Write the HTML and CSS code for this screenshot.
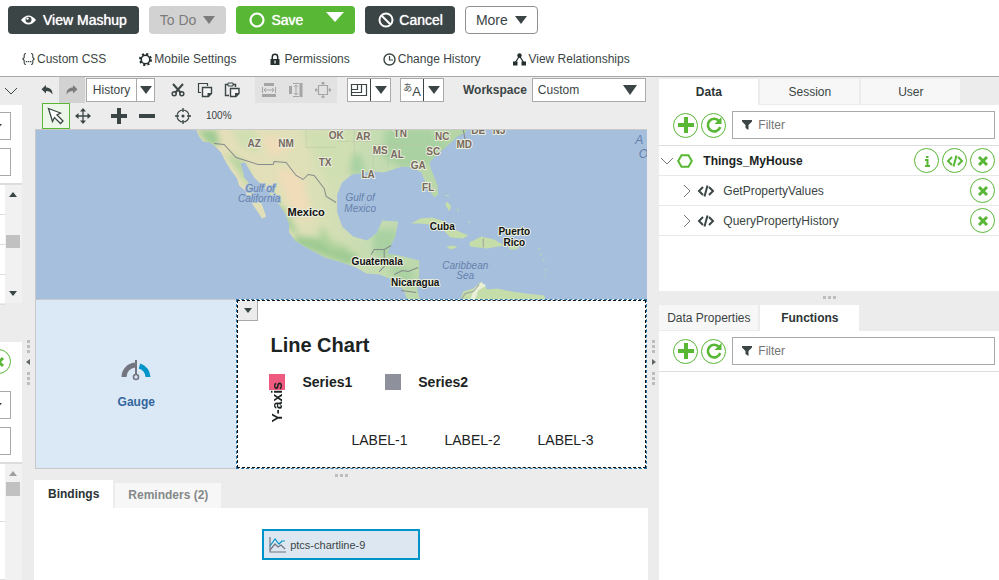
FILE: index.html
```html
<!DOCTYPE html>
<html lang="en">
  <head>
    <meta charset="UTF-8" />
    <meta name="viewport" content="width=device-width, initial-scale=1.0" />
    <title>Mashup Builder</title>
    <link rel="stylesheet" href="styles.css">
  </head>
  <body>
    <!-- Shared icons -->
    <svg class="sprite" width="0" height="0" aria-hidden="true">
      <symbol id="i-code" viewBox="0 0 18 14"><path d="M6 3L2 7l4 4M12 3l4 4-4 4M10.500 1.500l-3 11" fill="none" stroke="currentColor" stroke-width="2"/></symbol>
      <symbol id="i-close" viewBox="0 0 12 12"><path d="M2 2l8 8M10 2l-8 8" stroke="currentColor" stroke-width="3"/></symbol>
      <symbol id="i-plus" viewBox="0 0 18 18"><path d="M9 1v16M1 9h16" stroke="currentColor" stroke-width="4"/></symbol>
      <symbol id="i-refresh" viewBox="0 0 18 18"><path d="M14 5a6.300 6.300 0 1 0 1.200 6" fill="none" stroke="currentColor" stroke-width="2.600"/><path d="M16.500 1v7h-7z" fill="currentColor"/></symbol>
      <symbol id="i-filter" viewBox="0 0 10 10"><path d="M0 0h10v1.500L6.500 5v5l-3-2V5L0 1.500z" fill="currentColor"/></symbol>
      <symbol id="i-right" viewBox="0 0 8 14"><path d="M1 1l6 6-6 6" fill="none" stroke="currentColor"/></symbol>
      <symbol id="i-down" viewBox="0 0 14 8"><path d="M1 1l6 6 6-6" fill="none" stroke="currentColor"/></symbol>
      <symbol id="i-undo" viewBox="0 0 12 10"><path d="M5 0v2.500c4 0 6.500 2 6.500 7C10 7 8 6 5 6v2.500L.5 4.300z" fill="currentColor"/></symbol>
    </svg>

    <header class="header">
      <div class="actions">
        <button class="btn btn-dark btn-view">
          <svg width="15" height="10" viewBox="0 0 15 10"><path d="M0 5Q7.500-4 15 5 7.500 14 0 5z" fill="#fff"/><circle cx="7.500" cy="4.800" r="3" fill="#3b4545"/><circle cx="6.500" cy="3.600" r="1.200" fill="#fff"/></svg>
          View Mashup
        </button>
        <button class="btn btn-disabled" disabled>To Do <span class="caret"></span></button>
        <div class="btn-group">
          <button class="btn btn-green btn-save">
            <svg width="16" height="16" viewBox="0 0 16 16"><circle cx="8" cy="8" r="6.500" fill="none" stroke="#fff" stroke-width="2.200"/></svg>
            Save
          </button>
          <button class="btn btn-green btn-more" aria-label="Save options"><span class="caret caret-large"></span></button>
        </div>
        <button class="btn btn-dark btn-cancel">
          <svg width="16" height="16" viewBox="0 0 16 16"><circle cx="8" cy="8" r="6.500" fill="none" stroke="#fff" stroke-width="2"/><path d="M3.500 3.500l9 9" stroke="#fff" stroke-width="2"/></svg>
          Cancel
        </button>
        <button class="btn btn-outline">More <span class="caret"></span></button>
      </div>
      <nav class="links">
        <a href="#css">
          <svg width="13" height="14" viewBox="0 0 13 14"><path d="M4 1.500Q2.200 1.500 2.200 3v2.500L.8 7l1.400 1.500V11q0 1.500 1.800 1.500M9 1.500q1.800 0 1.800 1.500v2.500L12.200 7l-1.400 1.500V11q0 1.500-1.800 1.500" fill="none" stroke="#3b4545" stroke-width="1.100"/><path d="M3.800 9h1.400v1.300H3.800zM5.900 9h1.400v1.300H5.900zM8 9h1.400v1.300H8z" fill="#3b4545"/></svg>
          Custom CSS
        </a>
        <a href="#mobile">
          <svg width="13" height="13" viewBox="0 0 13 13"><circle cx="6.500" cy="6.500" r="4.300" fill="none" stroke="#252e2e" stroke-width="1.600"/><circle cx="6.500" cy="6.500" r="5.500" fill="none" stroke="#252e2e" stroke-width="2" stroke-dasharray="2.160"/></svg>
          Mobile Settings
        </a>
        <a href="#permissions">
          <svg width="13" height="13" viewBox="0 0 13 13"><path d="M3.300 6V4a2.700 2.700 0 0 1 5.400 0v2" fill="none" stroke="#252e2e" stroke-width="1.500"/><path d="M1.500 6h9v6h-9z" fill="#252e2e"/><path d="M6 7.500v3" stroke="#fff" stroke-width="1.200"/></svg>
          Permissions
        </a>
        <a href="#history">
          <svg width="13" height="13" viewBox="0 0 13 13"><circle cx="6.500" cy="6.500" r="5.500" fill="none" stroke="#3b4545" stroke-width="1.400"/><path d="M6.500 3v4H10" fill="none" stroke="#3b4545" stroke-width="1.200"/></svg>
          Change History
        </a>
        <a href="#relationships">
          <svg width="13" height="13" viewBox="0 0 13 13"><path d="M6.500 3L2 10M6.500 3L11 10" stroke="#252e2e" stroke-width="1.300"/><circle cx="6.500" cy="2.500" r="2.200" fill="#252e2e"/><path d="M0 8.500h4.500v4H0zM8.500 8.500H13v4H8.500z" fill="#252e2e"/></svg>
          View Relationships
        </a>
      </nav>
    </header>

    <main class="workspace">
      <!-- Right edge of the collapsed left panels -->
      <aside class="left-panel">
        <div class="left-head"><svg width="14" height="8"><use href="#i-down"/></svg></div>
        <div class="left-fields">
          <button class="field-edge" aria-label="Category"><span class="caret caret-small"></span></button>
          <input class="field-edge" type="text" aria-label="Filter widgets">
        </div>
        <div class="scroll-list">
          <div class="rows"><i></i><i></i><i></i><i></i></div>
          <div class="scrollbar"><span class="caret caret-small caret-up"></span><span class="thumb thumb-mid"></span><span class="caret caret-small"></span></div>
        </div>
        <div class="left-space"></div>
        <div class="left-fields left-fields-tall">
          <button class="round" aria-label="Remove"><svg width="12" height="12"><use href="#i-close"/></svg></button>
          <button class="field-edge" aria-label="Property type"><span class="caret caret-small"></span></button>
          <input class="field-edge" type="text" aria-label="Filter properties">
        </div>
        <div class="scroll-list scroll-list-last">
          <div class="rows rows-tall"><i></i><i></i></div>
          <div class="scrollbar"><span class="caret caret-small caret-up caret-dim"></span><span class="thumb"></span></div>
        </div>
      </aside>
      <div class="splitter"><i></i><i></i><i></i><span class="arrow"></span><i></i><i></i><i></i></div>

      <section class="center">
        <div class="toolbar">
          <div class="tool-row">
            <button class="tool tool-undo" aria-label="Undo"><svg width="12" height="10"><use href="#i-undo"/></svg></button>
            <button class="tool tool-redo" aria-label="Redo" disabled><svg width="12" height="10"><use href="#i-undo"/></svg></button>
            <div class="combo combo-history"><button>History</button><button aria-label="Show history"><span class="caret"></span></button></div>
            <div class="tool-set tool-edit">
              <button class="tool" aria-label="Cut"><svg width="14" height="14" viewBox="0 0 14 14"><path d="M2 1l8 9M12 1L4 10" stroke="#3b4545" stroke-width="2"/><circle cx="3.200" cy="10.800" r="2" fill="none" stroke="#3b4545" stroke-width="1.500"/><circle cx="10.800" cy="10.800" r="2" fill="none" stroke="#3b4545" stroke-width="1.500"/></svg></button>
              <button class="tool" aria-label="Copy"><svg width="16" height="16" viewBox="0 0 16 16"><path d="M4 10.500H1.500v-9h9V4" fill="none" stroke="#3b4545" stroke-width="1.200"/><path d="M5.500 5.500h9v6l-3 3h-6z" fill="#f5f5f5" stroke="#3b4545" stroke-width="1.400"/><path d="M10.500 15v-4H15z" fill="#3b4545"/></svg></button>
              <button class="tool" aria-label="Paste"><svg width="16" height="16" viewBox="0 0 16 16"><path d="M5 13.500H1.500v-11H4M9 2.500h2.500V5" fill="none" stroke="#3b4545" stroke-width="1.400"/><path d="M4 1h5v3H4z" fill="none" stroke="#3b4545"/><path d="M6.500 6.500h8.500v5l-3 3H6.500z" fill="#f5f5f5" stroke="#3b4545" stroke-width="1.400"/><path d="M11 15v-4h4z" fill="#3b4545"/></svg></button>
            </div>
            <div class="tool-set tool-align">
              <button class="tool" aria-label="Same width" disabled><svg width="16" height="16" viewBox="0 0 16 16"><path d="M3 2.500h10" stroke="#a5a5a5" stroke-width="3"/><path d="M1 13.500h14" stroke="#a5a5a5" stroke-width="3"/><path d="M1.500 5v6M14.500 5v6M3 8h10M5 6L3 8l2 2M11 6l2 2-2 2" fill="none" stroke="#a5a5a5"/></svg></button>
              <button class="tool" aria-label="Same height" disabled><svg width="16" height="16" viewBox="0 0 16 16"><path d="M2.500 4v8" stroke="#a5a5a5" stroke-width="3"/><path d="M13 1v14" stroke="#a5a5a5" stroke-width="3"/><path d="M5 1.500h6M5 14.500h6M8 3v10M6 5l2-2 2 2M6 11l2 2 2-2" fill="none" stroke="#a5a5a5"/></svg></button>
              <button class="tool" aria-label="Same size" disabled><svg width="16" height="16" viewBox="0 0 16 16"><path d="M3.500 3.500h9v9h-9zM8 0v3M8 13v3M0 8h3M13 8h3M6.500 1.500L8 0l1.500 1.500M6.500 14.500L8 16l1.500-1.500M1.500 6.500L0 8l1.500 1.500M14.500 6.500L16 8l-1.500 1.500" fill="none" stroke="#a5a5a5" stroke-width="1.200"/></svg></button>
            </div>
            <div class="combo combo-icon"><button aria-label="Layout"><svg width="18" height="14" viewBox="0 0 18 14"><path d="M1.500 1.500h15v11h-15zM1.500 9.500h10v-8M1.500 6.500h6v-5" fill="none" stroke="#3b4545" stroke-width="1.200"/></svg></button><button aria-label="Layout options"><span class="caret"></span></button></div>
            <div class="combo combo-icon"><button class="lang" aria-label="Localization"><span>あ</span><span>A</span></button><button aria-label="Languages"><span class="caret"></span></button></div>
            <label class="workspace-label" for="workspace">Workspace</label>
            <div class="select-wrap">
              <select id="workspace"><option>Custom</option></select>
              <span class="caret caret-select"></span>
            </div>
          </div>
          <div class="tool-row tool-row-zoom">
            <button class="tool tool-active" aria-label="Select"><svg width="18" height="18" viewBox="0 0 18 18"><path d="M1.500 1.500l12 4.500-3.500 2 6 6-2.500 2.500-6-6-2 4z" fill="#fff" stroke="#3b4545" stroke-width="1.300"/></svg></button>
            <button class="tool tool-move" aria-label="Move"><svg width="16" height="16" viewBox="0 0 16 16"><path d="M8 1v14M1 8h14" stroke="#3b4545" stroke-width="1.300"/><path d="M8 0l3 3.500H5zM8 16l3-3.500H5zM0 8l3.500-3v6zM16 8l-3.500-3v6z" fill="#3b4545"/></svg></button>
            <button class="tool tool-zoom" aria-label="Zoom in"><svg width="18" height="18"><use href="#i-plus"/></svg></button>
            <button class="tool tool-zoom" aria-label="Zoom out"><svg width="18" height="18" viewBox="0 0 18 18"><path d="M1 9h16" stroke="#3b4545" stroke-width="4"/></svg></button>
            <button class="tool tool-reset" aria-label="Reset zoom"><svg width="16" height="16" viewBox="0 0 16 16"><circle cx="8" cy="8" r="6" fill="none" stroke="#3b4545" stroke-width="1.100"/><path d="M8 0v4M8 12v4M0 8h4M12 8h4" stroke="#3b4545" stroke-width="1.300"/><circle cx="8" cy="8" r="1.500" fill="#3b4545"/></svg></button>
            <span class="zoom-value">100%</span>
          </div>
        </div>

        <div class="canvas">
          <svg class="map" viewBox="0 0 611 170" preserveAspectRatio="xMidYMid slice">
            <defs>
              <path id="mainland" d="M160 0l3 7 4 5 7 1 5 4 6 6 5 10 5 8 6 8 2 7 6 5 4 9 7 10 6 9 4-2-2-6-3-8-5-7-5-10-7-8-2-9-2-5 5-1 4 7 5 8 10 10 7 8 8 9 6 9 4 10v9l6 8 13 8 17 9 17 5 14 5 10 6 13 1 13 5 11 10 5 12h12l-3-12 2-15v-14l-20-5-12-2 4-9 4-8 3-15-16-1-5 12-10 8-14-4-11-10-5-14v-18l5-12 10-8 20-3 12 1 18-6 10 1 9 5 6 14 7 11 4-3-1-10-6-15-2-7 10-10 13-11 5-5 9-4-2-9z"/>
              <clipPath id="land"><use href="#mainland"/></clipPath>
              <linearGradient id="terrain" x1="0" x2="1"><stop offset="0" stop-color="#e7dfb9"/><stop offset=".4" stop-color="#dfe0b8"/><stop offset=".65" stop-color="#c6dcb2"/><stop offset="1" stop-color="#b3d4a5"/></linearGradient>
              <filter id="soft" x="-20%" y="-20%" width="140%" height="140%"><feGaussianBlur stdDeviation="3"/></filter>
            </defs>
            <rect width="611" height="170" fill="#a5bfdd"/>
            <use href="#mainland" fill="url(#terrain)"/>
            <g clip-path="url(#land)">
              <g filter="url(#soft)">
                <path d="M160 0h20l4 15-10 2zM228 60l20 20 15 25-10-5-18-27zM258 106l20 2 25 10 20 8-10 10-55-20z" fill="#9fcb93"/>
                <path d="M188 22l20 10 8 25 10 20-20-30zM285 95l12 17 20 6-20 3-15-12z" fill="#b3d49d"/>
                <path d="M240 40l15 0 12 12 10 40 -20-8zM225 8h20l10 12-20 6z" fill="#f0dcb9"/>
                <path d="M310 25h15l5 20h-15zM350 0h40l25 15-20 18-25 6-25-12zM337 100h25l-5 30-20-5zM350 135l25 5 3 20-20-14z" fill="#a9d1a2"/>
                <path d="M195 0l10 18 18 5 2-10-8-14zM265 0h50v35l-18 20-15-20z" fill="#d0dfb1"/>
              </g>
              <path d="M270 0v18h30M300 12h35M337 17v28M352 17v20M338 15h55M365 15v22M392 0v12M318 0v25" fill="none" stroke="#b4c6a6" stroke-width=".5"/>
            </g>
            <g fill="#c5dda9">
              <path d="M375 94l9-5 12-1 12 4 10 8 14 6-5 3-13-1-8-9-12-4-10-1z"/>
              <path d="M433 113l12-6 13 3 10 6-17 3-9-1-8-1zM410 117l8-1 3 2-7 2zM473 117h10l-2 3h-8zM409 75l4 7 2-5-4-5zM407 65l6 1-1 1z"/>
              <path d="M424 170l3-8 10-3 8-7 6 8 10-1 14 3 15 2 18 2 1 5z"/>
              <path d="M502 119h2v1h-2zM504 124h1v2h-1zM507 130h1v2h-1zM509 139h1v2h-1zM508 147h1v1h-1zM420 78l3 3-1 1zM432 92h2v1h-2z"/>
            </g>
            <path d="M445 153l-7 6-4 11 5 0 3-9 8-5z" fill="#eaf0d8"/>
            <path d="M425 170l4-6 8-2 6-7M447 109v9" fill="none" stroke="#9aa19a"/>
            <path d="M178 14l10 1 12 13 22 7h15l1-3 12 1 10 13 7 4 5-5 6 1 10 13 2 8 10 6M335 125l3-5h10v17l-5 5M348 120l7-4M358 145l8-4 6 1 10-4M365 161l15 2M427 0l2 11" fill="none" stroke="#858b8b"/>
            <g class="map-state">
              <text x="218" y="18">AZ</text><text x="250" y="18">NM</text><text x="300" y="10">OK</text><text x="327" y="11">AR</text><text x="364" y="8">TN</text><text x="406" y="11">NC</text><text x="344" y="25">MS</text><text x="361" y="29">AL</text><text x="397" y="26">SC</text><text x="289" y="37">TX</text><text x="382" y="40">GA</text><text x="332" y="49">LA</text><text x="392" y="62">FL</text><text x="428" y="19">MD</text><text x="442" y="5">DE</text><text x="463" y="5">NJ</text>
            </g>
            <g class="map-water">
              <text x="224" y="63">Gulf of</text><text x="223" y="73">California</text><text x="324" y="72">Gulf of</text><text x="324" y="83">Mexico</text><text x="429" y="139">Caribbean</text><text x="429" y="149">Sea</text>
            </g>
            <g class="map-ocean"><text x="603" y="15">A</text><text x="607" y="29">O</text></g>
            <g class="map-country">
              <text class="map-big" x="270" y="87">Mexico</text><text x="406" y="101">Cuba</text><text x="478" y="106">Puerto</text><text x="478" y="116">Rico</text><text x="341" y="135">Guatemala</text><text x="379" y="156">Nicaragua</text>
            </g>
          </svg>
          <div class="widgets">
            <div class="gauge">
              <svg width="30" height="22" viewBox="0 0 30 22"><path d="M3 18A12 12 0 0 1 14 6" fill="none" stroke="#73757f" stroke-width="5"/><path d="M18.500 7A12 12 0 0 1 27 18" fill="none" stroke="#0094c8" stroke-width="5"/><path d="M15 1v14" stroke="#73757f" stroke-width="2"/><circle cx="15" cy="18" r="2.500" fill="#dbe9f7" stroke="#73757f" stroke-width="1.600"/></svg>
              <span>Gauge</span>
            </div>
            <div class="chart-frame">
              <div class="chart">
                <button class="chart-menu" aria-label="Widget menu"><span class="caret caret-small"></span></button>
                <h2>Line Chart</h2>
                <div class="legend">
                  <span class="swatch swatch-pink"></span><span class="series">Series1</span>
                  <span class="swatch swatch-gray"></span><span class="series">Series2</span>
                  <span class="y-axis">Y-axis</span>
                </div>
                <div class="x-labels"><span>LABEL-1</span><span>LABEL-2</span><span>LABEL-3</span></div>
              </div>
            </div>
          </div>
        </div>

        <div class="dots"><i></i><i></i><i></i></div>
        <div class="bottom-tabs">
          <button class="bottom-tab active">Bindings</button>
          <button class="bottom-tab">Reminders (2)</button>
        </div>
        <div class="bindings">
          <div class="node">
            <svg width="17" height="17" viewBox="0 0 17 17"><path d="M1 1v15h16" fill="none" stroke="#73757f" stroke-width="1.200"/><path d="M1 14l5-6 3 3 3-2 4 4" fill="none" stroke="#73757f" stroke-width="1.200"/><path d="M1 10l5-7 4 5 3-3h3" fill="none" stroke="#0094c8" stroke-width="1.200"/></svg>
            <span>ptcs-chartline-9</span>
          </div>
        </div>
      </section>

      <div class="splitter splitter-right"><i></i><i></i><i></i><span class="arrow arrow-right"></span><i></i><i></i><i></i></div>

      <aside class="right-panel">
        <div class="tabs tabs-top"><button class="tab active">Data</button><button class="tab">Session</button><button class="tab">User</button></div>
        <div class="data">
          <div class="filter-row">
            <button class="round" aria-label="Add data"><svg width="18" height="18"><use href="#i-plus"/></svg></button>
            <button class="round" aria-label="Refresh data"><svg width="18" height="18"><use href="#i-refresh"/></svg></button>
            <label class="filter"><svg width="10" height="10"><use href="#i-filter"/></svg><input type="text" placeholder="Filter" aria-label="Filter data"></label>
          </div>
          <div class="entity">
            <svg class="chevron" width="14" height="8"><use href="#i-down"/></svg>
            <svg width="16" height="14" viewBox="0 0 16 14"><path d="M4.500 1.200h7L14.800 7l-3.300 5.800h-7L1.200 7z" fill="none" stroke="#58b735" stroke-width="2"/></svg>
            <strong>Things_MyHouse</strong>
            <button class="round" aria-label="Information"><svg width="12" height="12" viewBox="0 0 12 12"><path d="M4 5h2.500v6M4 11h5" fill="none" stroke="currentColor" stroke-width="2"/><path d="M5 1h2.500v2H5z" fill="currentColor"/></svg></button>
            <button class="round" aria-label="Add services"><svg width="18" height="14"><use href="#i-code"/></svg></button>
            <button class="round" aria-label="Remove Things_MyHouse"><svg width="12" height="12"><use href="#i-close"/></svg></button>
          </div>
          <div class="entity service">
            <svg class="chevron" width="8" height="14"><use href="#i-right"/></svg>
            <svg width="18" height="14"><use href="#i-code"/></svg>
            <span>GetPropertyValues</span>
            <button class="round" aria-label="Remove GetPropertyValues"><svg width="12" height="12"><use href="#i-close"/></svg></button>
          </div>
          <div class="entity service">
            <svg class="chevron" width="8" height="14"><use href="#i-right"/></svg>
            <svg width="18" height="14"><use href="#i-code"/></svg>
            <span>QueryPropertyHistory</span>
            <button class="round" aria-label="Remove QueryPropertyHistory"><svg width="12" height="12"><use href="#i-close"/></svg></button>
          </div>
        </div>
        <div class="dots"><i></i><i></i><i></i></div>
        <div class="tabs"><button class="tab">Data Properties</button><button class="tab active">Functions</button></div>
        <div class="functions">
          <div class="filter-row">
            <button class="round" aria-label="Add function"><svg width="18" height="18"><use href="#i-plus"/></svg></button>
            <button class="round" aria-label="Refresh functions"><svg width="18" height="18"><use href="#i-refresh"/></svg></button>
            <label class="filter"><svg width="10" height="10"><use href="#i-filter"/></svg><input type="text" placeholder="Filter" aria-label="Filter functions"></label>
          </div>
        </div>
      </aside>
    </main>
  </body>
</html>
```

FILE: styles.css
```css
* {
  box-sizing: border-box;
}
body {
  margin: 0;
  height: 100vh;
  display: flex;
  flex-direction: column;
  overflow: hidden;
  background-color: #fff;
  color: #3b4545;
  font-family: "Liberation Sans", Arial, "Noto Sans CJK JP", sans-serif;
  font-size: 12px;
  line-height: 16px;
}
button, input, select {
  font: inherit;
  color: inherit;
  margin: 0;
  padding: 0;
  border: 0;
  border-radius: 0;
  background: none;
}
button {
  display: flex;
  align-items: center;
  justify-content: center;
}
svg {
  display: block;
  flex: none;
}
.sprite {
  position: absolute;
}
.caret {
  flex: none;
  border: 6px solid transparent;
  border-top: 8px solid currentColor;
  border-bottom: 0;
}
.caret-large {
  border-width: 10px 9px 0;
}
.caret-small {
  border-width: 5px 4px 0;
}
.caret-up {
  transform: rotate(180deg);
}
.caret-dim {
  color: #a0a0a0;
}

/* Header */
.header {
  flex: none;
  border-bottom: 1px solid #a8a8a8;
}
.actions {
  display: flex;
  gap: 10px;
  padding: 6px 8px 0;
}
.btn {
  height: 28px;
  padding: 0 10px;
  gap: 7px;
  border-radius: 4px;
  font-size: 14px;
  white-space: nowrap;
}
.btn-dark {
  background-color: #3b4545;
  color: #fff;
}
.btn-view, .btn-cancel {
  padding: 0 12px 0 13px;
  text-shadow: 0 0 1px #fff;
}
.btn-cancel {
  gap: 5px;
}
.btn-disabled {
  background-color: #d2d2d2;
  color: #7b7b7b;
  padding: 0 11px;
}
.btn-group {
  display: flex;
}
.btn-green {
  background-color: #58b735;
  color: #fff;
}
.btn-save {
  padding: 0 11px 0 13px;
  gap: 6px;
  border-radius: 4px 0 0 4px;
  text-shadow: 0 0 1px #fff;
}
.btn-more {
  width: 41px;
  border-radius: 0 4px 4px 0;
  padding-bottom: 6px;
}
.btn-outline {
  border: 1px solid #8c9191;
}
.links {
  display: flex;
  gap: 33px;
  padding: 17px 22px 9px;
}
.links a {
  display: flex;
  align-items: center;
  gap: 2px;
  color: #3b4545;
  text-decoration: none;
  white-space: nowrap;
}

/* Left panel */
.workspace {
  flex: 1;
  min-height: 0;
  display: flex;
  background-color: #ececec;
}
.left-panel {
  width: 22px;
  flex: none;
  display: flex;
  flex-direction: column;
  overflow: hidden;
}
.left-head {
  height: 28px;
  padding: 10px 4px;
}
.left-fields {
  display: flex;
  flex-direction: column;
  align-items: flex-end;
  gap: 8px;
  padding: 7px 11px;
  background-color: #fff;
  border-bottom: 2px solid #ddd;
}
.field-edge {
  width: 120px;
  height: 28px;
  border: 1px solid #aaa;
  background-color: #fff;
  justify-content: flex-end;
  padding-right: 8px;
}
.left-fields-tall .round {
  margin-bottom: 9px;
}
.scroll-list {
  height: 118px;
  display: flex;
  background-color: #fff;
}
.scroll-list-last {
  flex: 1;
}
.rows {
  width: 5px;
}
.rows i {
  display: block;
  height: 30px;
  border-bottom: 1px solid #ddd;
}
.rows-tall i {
  height: 58px;
}
.scrollbar {
  width: 17px;
  display: flex;
  flex-direction: column;
  align-items: center;
  padding: 7px 3px 7px 1px;
  background-color: #f1f1f1;
}
.thumb {
  width: 14px;
  height: 14px;
  margin-top: 6px;
  background-color: #c1c1c1;
}
.thumb-mid {
  margin: 38px 0 43px;
}
.left-space {
  height: 40px;
}

/* Splitters */
.splitter {
  flex: none;
  width: 12px;
  display: flex;
  flex-direction: column;
  align-items: center;
  gap: 2px;
  padding-top: 263px;
}
.splitter-right {
  width: 11px;
}
.splitter i, .dots i {
  width: 3px;
  height: 3px;
  background-color: #bdbdbd;
}
.arrow {
  margin: 4px 0 5px;
  border: 3px solid transparent;
  border-left: 0;
  border-right: 4px solid #606666;
}
.arrow-right {
  border-right: 0;
  border-left: 4px solid #606666;
}
.dots {
  display: flex;
  justify-content: center;
  gap: 2px;
}

/* Toolbar */
.center {
  flex: 1;
  min-width: 0;
  display: flex;
  flex-direction: column;
}
.toolbar {
  padding: 0 1px;
}
.tool-row {
  display: flex;
  align-items: center;
  height: 26px;
}
.tool {
  height: 26px;
}
.tool-undo {
  width: 24px;
}
.tool-redo {
  width: 26px;
  background-color: #d2d2d2;
  color: #7b7b7b;
}
.tool-redo svg {
  transform: scaleX(-1);
}
.combo {
  display: flex;
  height: 24px;
  border: 1px solid #aaa;
  background-color: #fff;
}
.combo button + button {
  width: 18px;
  border-left: 1px solid #aaa;
}
.combo-history {
  margin-left: 1px;
}
.combo-history button:first-child {
  width: 49px;
}
.tool-set {
  display: flex;
  justify-content: space-between;
}
.tool-edit {
  width: 69px;
  margin: 0 15px 0 16px;
}
.tool-align {
  width: 82px;
  padding: 0 6px;
  background-color: #e2e2e2;
}
.combo-icon {
  width: 44px;
  margin-left: 10px;
}
.combo-icon button:first-child {
  flex: 1;
}
.combo-icon button + button {
  width: 20px;
  border-color: #3b4545;
}
.combo-icon + .combo-icon {
  margin-left: 9px;
}
.lang span:first-child {
  font-size: 9px;
  padding-bottom: 5px;
}
.lang span:last-child {
  font-size: 13px;
  padding-top: 4px;
}
.workspace-label {
  margin: 0 5px 0 19px;
  font-weight: bold;
}
.select-wrap {
  flex: 1;
  display: grid;
  align-items: center;
  margin-right: 1px;
}
.select-wrap > * {
  grid-area: 1 / 1;
}
.select-wrap select {
  width: 100%;
  height: 24px;
  padding-left: 5px;
  border: 1px solid #aaa;
  background-color: #fff;
  appearance: none;
}
.caret-select {
  justify-self: end;
  margin-right: 9px;
  border-width: 10px 7px 0;
  pointer-events: none;
}
.tool-row-zoom {
  padding-left: 7px;
}
.tool-active {
  width: 28px;
  background-color: #edf7e9;
  border: 1px solid #58b735;
}
.tool-move {
  width: 26px;
  margin-right: 9px;
}
.tool-zoom {
  width: 28px;
}
.tool-reset {
  width: 44px;
}
.zoom-value {
  margin-left: 1px;
  font-size: 10px;
}

/* Canvas */
.canvas {
  margin: 0 1px;
  border: 1px solid #c8c8c8;
  border-width: 1px 0 0 1px;
}
.map {
  width: 100%;
  height: 169px;
}
.map text {
  text-anchor: middle;
  font-size: 10px;
  paint-order: stroke;
  stroke: #e9eedd;
  stroke-width: 2px;
  stroke-linejoin: round;
}
.map .map-state {
  fill: #78695f;
  font-weight: bold;
}
.map .map-water text, .map .map-ocean text {
  fill: #657fac;
  stroke: #a5bfdd;
  font-style: italic;
}
.map .map-ocean text {
  font-size: 12px;
}
.map .map-country {
  fill: #111;
  font-weight: bold;
}
.map .map-big {
  font-size: 11px;
}
.widgets {
  display: flex;
  height: 170px;
}
.gauge {
  flex: 201;
  display: flex;
  flex-direction: column;
  align-items: center;
  gap: 13px;
  padding-top: 59px;
  background-color: #dbe9f7;
  border: 1px solid #c8c8c8;
  border-width: 1px 0;
  color: #33669c;
  font-weight: bold;
}
.chart-frame {
  flex: 410;
  border: 1px dashed #2a77ad;
  background-color: #fff;
}
.chart {
  height: 100%;
  border: 1px dashed #111;
  color: #1c2323;
  font-size: 14px;
}
.chart-menu {
  width: 20px;
  height: 20px;
  background-color: #ececec;
  border: 1px solid #aaa;
  border-width: 0 1px 1px 0;
  color: #3b4545;
}
.chart h2 {
  margin: 12px 0 17px 32px;
  font-size: 20px;
  line-height: 24px;
}
.legend {
  position: relative;
  display: flex;
  align-items: center;
  margin-left: 31px;
  font-weight: bold;
}
.swatch {
  width: 16px;
  height: 16px;
  margin-right: 17px;
}
.series + .swatch {
  margin-left: 33px;
}
.swatch-pink {
  background-color: #ee5a80;
}
.swatch-gray {
  background-color: #8e909b;
}
/* Overlaps the first legend marker */
.y-axis {
  position: absolute;
  left: 0;
  top: 8px;
  white-space: nowrap;
  writing-mode: vertical-rl;
  transform: rotate(180deg);
}
.x-labels {
  display: flex;
  gap: 37px;
  margin: 42px 0 0 113px;
}

/* Bindings */
.center .dots {
  height: 11px;
  padding-top: 5px;
}
.bottom-tabs {
  display: flex;
  gap: 2px;
  height: 28px;
}
.bottom-tab {
  height: 25px;
  margin-top: 3px;
  padding: 0 13px 2px;
  background-color: #f7f7f7;
  color: #858989;
  font-weight: bold;
}
.bottom-tab.active {
  height: 28px;
  margin-top: 0;
  padding: 0 14px;
  background-color: #fff;
  color: #2b3434;
}
.bindings {
  flex: 1;
  background-color: #fff;
  padding-top: 21px;
}
.node {
  width: 158px;
  height: 31px;
  margin: 0 auto;
  display: flex;
  align-items: center;
  gap: 4px;
  padding-left: 5px;
  border: 2px solid #0094c8;
  background-color: #dde7f1;
  font-size: 11px;
}

/* Right panel */
.right-panel {
  width: 34%;
  flex: none;
  display: flex;
  flex-direction: column;
}
.tabs {
  display: flex;
  gap: 2px;
}
.tabs-top {
  padding-top: 2px;
}
.tab {
  width: 99px;
  height: 25px;
  background-color: #f7f7f7;
}
.tab.active {
  height: 26px;
  background-color: #fff;
  color: #2b3434;
  font-weight: bold;
}
.data {
  height: 186px;
  background-color: #fff;
}
.filter-row {
  display: flex;
  align-items: center;
  gap: 3px;
  height: 41px;
  padding: 0 4px 0 14px;
  border-bottom: 1px solid #ddd;
}
.round {
  flex: none;
  width: 25px;
  height: 25px;
  border: 1px solid #58b735;
  border-radius: 50%;
  background-color: #fff;
  color: #58b735;
}
.filter {
  flex: 1;
  display: flex;
  align-items: center;
  gap: 6px;
  height: 28px;
  margin-left: 3px;
  padding-left: 9px;
  border: 1px solid #aaa;
}
.filter input {
  flex: 1;
  min-width: 0;
  outline: 0;
}
.filter input::placeholder {
  color: #757575;
  opacity: 1;
}
.entity {
  display: flex;
  align-items: center;
  gap: 3px;
  height: 30px;
  padding: 0 4px 0 1px;
  border-bottom: 1px solid #e8e8e8;
}
.entity strong {
  flex: 1;
  margin-left: 7px;
  color: #1c2323;
}
.entity span {
  flex: 1;
  margin-left: 4px;
}
.chevron {
  color: #777;
}
.service {
  padding-left: 24px;
  gap: 4px;
}
.service .chevron {
  margin-right: 2px;
}
.right-panel .dots {
  height: 14px;
  padding-top: 5px;
}
.functions {
  flex: 1;
  background-color: #fff;
}
```
